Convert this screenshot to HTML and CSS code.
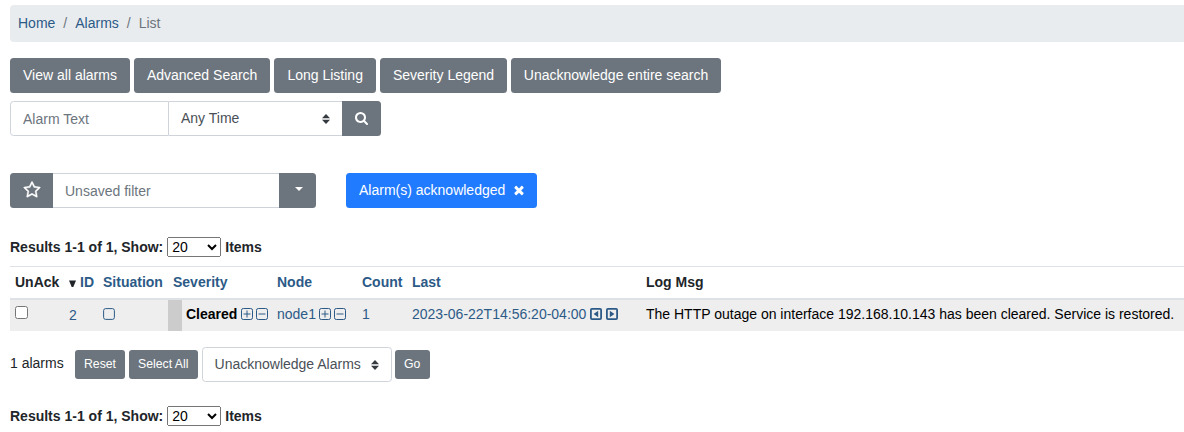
FILE: index.html
```html
<!DOCTYPE html>
<html lang="en">
<head>
<meta charset="utf-8">
<title>Alarms List</title>
<link rel="stylesheet" href="styles.css">
</head>
<body>
<svg class="defs" width="0" height="0" aria-hidden="true">
  <symbol id="updown" viewBox="0 0 8 10"><path d="M4 0L0 4.300h8zm0 10L0 5.700h8z" fill="#343a40"/></symbol>
  <symbol id="plus" viewBox="0 0 12 12"><rect x=".5" y=".5" width="11" height="11" rx="1.8"/><path d="M2.500 6h7M6 2.500v7"/></symbol>
  <symbol id="minus" viewBox="0 0 12 12"><rect x=".5" y=".5" width="11" height="11" rx="1.8"/><path d="M2.500 6h7"/></symbol>
</svg>
<nav class="breadcrumb"><a href="#">Home</a><span class="slash">/</span><a href="#">Alarms</a><span class="slash">/</span><span>List</span></nav>
<div class="toolbar">
  <button class="btn">View all alarms</button>
  <button class="btn">Advanced Search</button>
  <button class="btn">Long Listing</button>
  <button class="btn">Severity Legend</button>
  <button class="btn wide">Unacknowledge entire search</button>
</div>
<div class="group search">
  <input class="field text" type="text" placeholder="Alarm Text">
  <div class="field time"><span>Any Time</span><svg class="updown"><use href="#updown"/></svg></div>
  <button class="btn last"><svg class="search-icon" viewBox="0 0 1664 1792"><path fill="#fff" d="M1152 832q0-185-131.500-316.500t-316.500-131.500-316.500 131.500-131.500 316.500 131.500 316.500 316.500 131.500 316.500-131.500 131.500-316.500zm512 832q0 52-38 90t-90 38q-54 0-90-38l-343-342q-179 124-399 124-143 0-273.500-55.500t-225-150-150-225-55.500-273.500 55.500-273.500 150-225 225-150 273.500-55.500 273.500 55.500 225 150 150 225 55.500 273.500q0 220-124 399l343 343q37 37 37 90z"/></svg></button>
</div>
<div class="filters">
  <div class="group">
    <button class="btn first"><svg class="star" viewBox="0 0 1792 1792"><path fill="#fff" stroke="#fff" stroke-width="40" d="M1201 1004l306-297-422-62-189-382-189 382-422 62 306 297-73 421 378-199 377 199zm527-357q0 22-26 48l-363 354 86 500q1 7 1 20 0 50-41 50-19 0-40-12l-449-236-449 236q-22 12-40 12-21 0-31.500-14.500t-10.500-35.500q0-6 2-20l86-500-364-354q-25-27-25-48 0-37 56-46l502-73 225-455q19-41 49-41t49 41l225 455 502 73q56 9 56 46z"/></svg></button>
    <input class="field filter" type="text" placeholder="Unsaved filter">
    <button class="btn last drop"><span class="caret"></span></button>
  </div>
  <button class="btn primary">Alarm(s) acknowledged <svg class="times" viewBox="0 0 1792 1792"><path fill="#fff" d="M1490 1322q0 40-28 68l-136 136q-28 28-68 28t-68-28l-294-294-294 294q-28 28-68 28t-68-28l-136-136q-28-28-28-68t28-68l294-294-294-294q-28-28-28-68t28-68l136-136q28-28 68-28t68 28l294 294 294-294q28-28 68-28t68 28l136 136q28 28 28 68t-28 68l-294 294 294 294q28 28 28 68z"/></svg></button>
</div>
<div class="results"><span>Results 1-1 of 1, Show:</span><select><option>20</option></select><span>Items</span></div>
<table class="alarms">
  <colgroup><col class="c-ack"><col class="c-id"><col class="c-sit"><col class="c-sev"><col class="c-node"><col class="c-count"><col class="c-last"><col></colgroup>
  <thead><tr>
    <th>UnAck</th>
    <th><svg class="sort" viewBox="0 0 7 7"><path d="M0 .5h7L4.300 7H2.700z" fill="#212529"/></svg><a href="#">ID</a></th>
    <th><a href="#">Situation</a></th>
    <th><a href="#">Severity</a></th>
    <th><a href="#">Node</a></th>
    <th><a href="#">Count</a></th>
    <th><a href="#">Last</a></th>
    <th>Log Msg</th>
  </tr></thead>
  <tbody><tr>
    <td><input class="check" type="checkbox"></td>
    <td class="id"><a href="#">2</a></td>
    <td><svg class="square" viewBox="0 0 12 12"><rect x=".6" y=".6" width="10.800" height="10.800" rx="2"/></svg></td>
    <td class="severity"><b>Cleared</b><svg class="box"><use href="#plus"/></svg><svg class="box"><use href="#minus"/></svg></td>
    <td><a href="#">node1</a><svg class="box"><use href="#plus"/></svg><svg class="box"><use href="#minus"/></svg></td>
    <td><a href="#">1</a></td>
    <td><a href="#">2023-06-22T14:56:20-04:00</a><svg class="arrow" viewBox="0 0 12 12"><rect x=".9" y=".9" width="10.200" height="10.200" rx="1"/><path d="M8.200 2.800v6.400L3.600 6z"/></svg><svg class="arrow next" viewBox="0 0 12 12"><rect x=".9" y=".9" width="10.200" height="10.200" rx="1"/><path d="M3.800 2.800v6.400L8.400 6z"/></svg></td>
    <td>The HTTP outage on interface 192.168.10.143 has been cleared. Service is restored.</td>
  </tr></tbody>
</table>
<div class="actions">
  <span class="total">1 alarms</span>
  <button class="btn small">Reset</button>
  <button class="btn small select-all">Select All</button>
  <div class="field action"><span>Unacknowledge Alarms</span><svg class="updown"><use href="#updown"/></svg></div>
  <button class="btn small go">Go</button>
</div>
<div class="results"><span>Results 1-1 of 1, Show:</span><select><option>20</option></select><span>Items</span></div>
</body>
</html>
```

FILE: styles.css
```css
* { box-sizing: border-box; }
html { overflow: hidden; }
body { margin: 0; padding: 5px 0 0 10px; width: 1184px; background: #fff; color: #212529; font: 14px/21px "Liberation Sans", Arial, sans-serif; }
a { color: #2c5a87; text-decoration: none; }
svg { flex: none; }
.defs { position: absolute; }

.breadcrumb { display: flex; height: 37px; padding: 8px; background: #e9ecef; border-radius: 4px 0 0 4px; color: #6c757d; }
.slash { padding: 0 8px; }

.btn { display: flex; align-items: center; height: 35px; margin: 0; padding: 0 13px; border: 0; border-radius: 3.500px; background: #6c757d; color: #fff; font: inherit; white-space: nowrap; }
.toolbar { display: flex; gap: 4px; margin-top: 16px; }
.toolbar .btn { padding-bottom: 1px; }
.toolbar .wide { width: 210px; padding-left: 12.700px; padding-right: 0; }

.group { display: flex; }
.field { height: 35px; border: 1px solid #ced4da; background: #fff; color: #495057; font: inherit; padding: 0 12px; }
.field::placeholder { color: #6c757d; opacity: 1; }
.btn.first { border-radius: 3.500px 0 0 3.500px; }
.btn.last { border-radius: 0 3.500px 3.500px 0; }
.search { margin-top: 8px; }
.text { width: 159px; border-radius: 3.500px 0 0 3.500px; }
.time { width: 173px; border-left: 0; border-right: 0; display: flex; align-items: center; justify-content: space-between; }
.updown { width: 8px; height: 10px; }
.search-icon { width: 13px; height: 14px; margin-bottom: 2px; }

.filters { display: flex; gap: 30px; margin-top: 37px; }
.first { width: 43px; }
.star { width: 18px; height: 18px; margin-bottom: 1px; }
.filter { width: 226px; border-left: 0; border-right: 0; }
.drop { width: 37px; padding: 0; justify-content: center; }
.caret { border: 4px solid transparent; border-top-color: #fff; border-bottom: 0; margin-left: 2px; margin-bottom: 4px; }
.primary { background: #217bff; width: 191px; justify-content: space-between; padding-right: 11px; }
.times { width: 14px; height: 14px; margin-bottom: 2px; }

.results { display: flex; align-items: center; gap: 4px; height: 20px; margin-top: 29px; font-weight: 700; }
.results select { width: 54px; height: 20px; margin: 0; padding: 0; font: 14px "Liberation Sans", Arial, sans-serif; }

.alarms { width: 1174px; margin-top: 9px; table-layout: fixed; border-collapse: separate; border-spacing: 0; }
.alarms th, .alarms td { padding: 0 0 0 5px; text-align: left; white-space: nowrap; vertical-align: middle; }
.alarms th { height: 34px; border-top: 1px solid #dee2e6; border-bottom: 2px solid #dee2e6; }
.alarms td { height: 31px; padding-bottom: 2px; background: #eee; color: #000; }
.c-ack { width: 54px; }
.c-id { width: 34px; }
.c-sit { width: 70px; }
.c-sev { width: 104px; }
.c-node { width: 85px; }
.c-count { width: 50px; }
.c-last { width: 234px; }
.sort { width: 7px; height: 7px; margin-right: 4px; vertical-align: 0; }
.check { display: block; width: 13px; height: 13px; margin: 0 0 5px; }
.alarms td.id { padding-bottom: 0; }
.alarms td.severity { border-left: 14px solid #ccc; padding-left: 4px; }
.square, .box, .arrow { width: 12px; height: 12px; fill: none; stroke: #2c5a87; stroke-width: 1; vertical-align: -1px; }
.box { margin-left: 3px; }
td > :first-child + .box { margin-left: 3.500px; }
.arrow { stroke-width: 1.800; margin-left: 4px; }
.arrow path { fill: #2c5a87; stroke: none; }

.actions { display: flex; align-items: center; height: 35px; margin-top: 16px; }
.total { width: 65px; padding-bottom: 2px; }
.small { height: 29px; padding: 0 9px; margin-right: 4px; font-size: 12.250px; border-radius: 3px; }
.select-all { width: 69px; }
.go { width: 35px; }
.action { display: flex; align-items: center; justify-content: space-between; width: 190px; margin-right: 3px; padding-left: 11.500px; border-radius: 3.500px; }
.actions + .results { margin-top: 24px; }
```
